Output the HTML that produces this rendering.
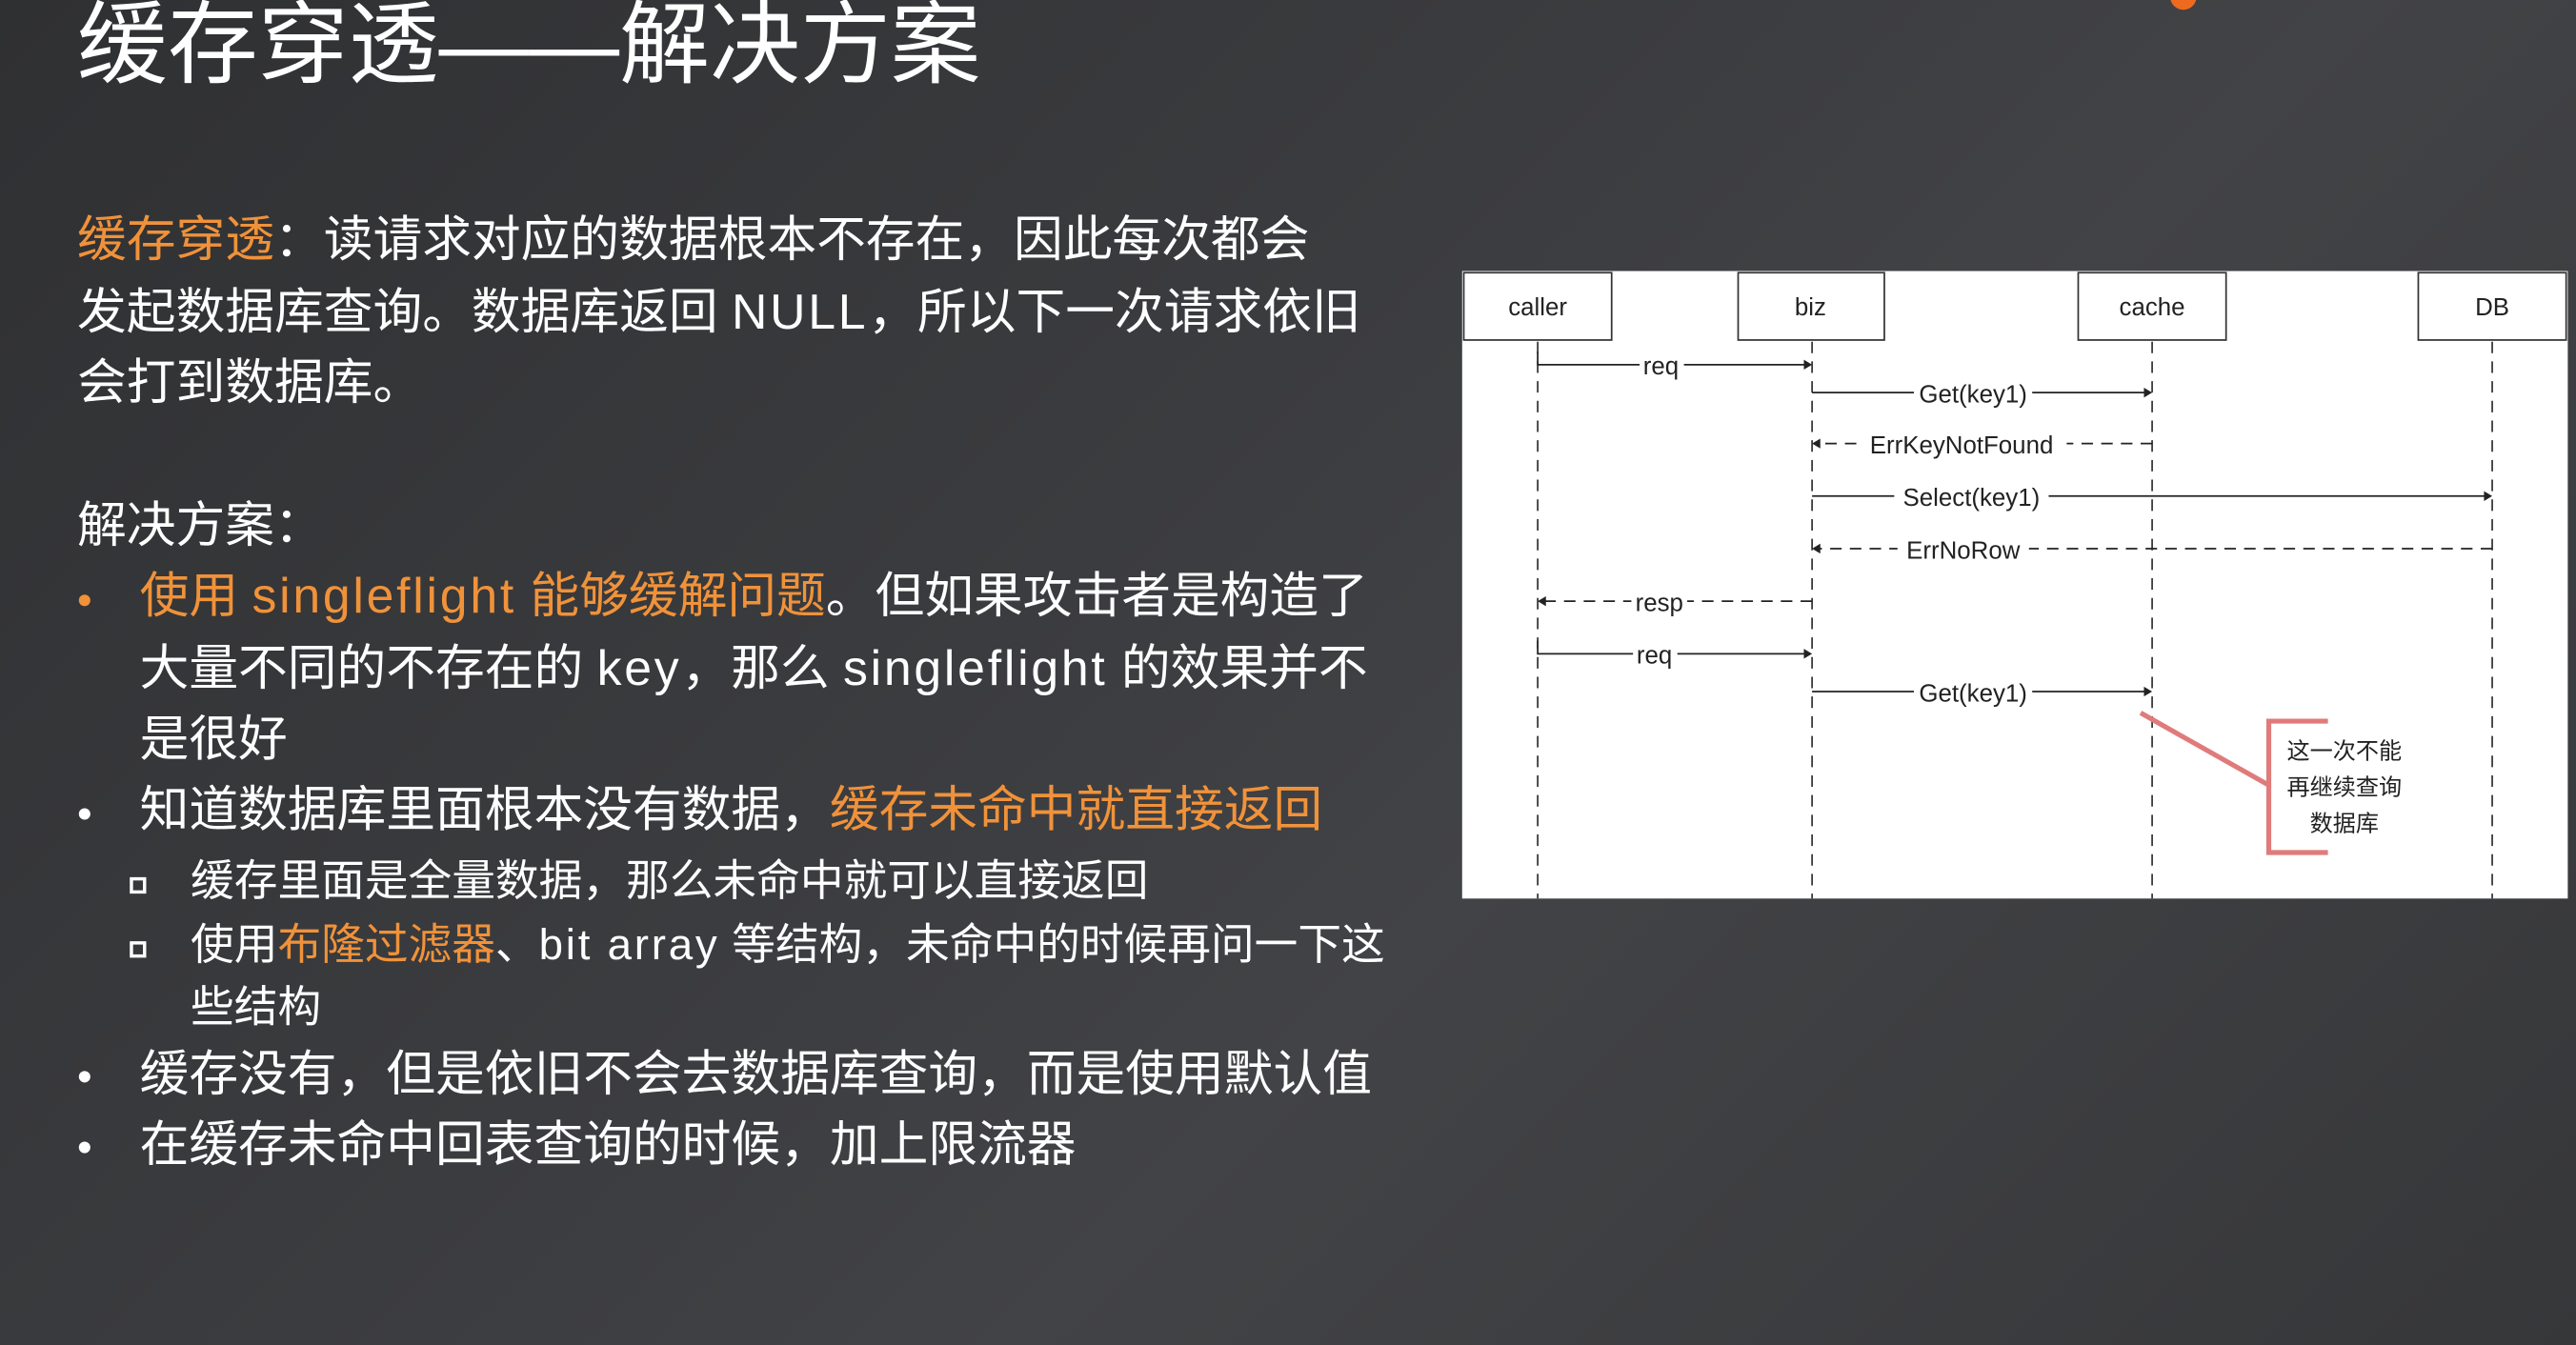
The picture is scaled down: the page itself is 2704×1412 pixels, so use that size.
<!DOCTYPE html>
<html><head><meta charset="utf-8"><style>
html,body{margin:0;padding:0;width:2704px;height:1412px;overflow:hidden;background:#393a3d;}
#w{position:absolute;left:0;top:0;width:1568px;height:819px;transform:scale(1.72449);transform-origin:0 0;
background:linear-gradient(135deg,#2f3032 0%,#3c3d40 45%,#424346 60%,#363739 100%);
font-family:"Liberation Sans","Noto Sans CJK SC",sans-serif;color:#fff;}
.l{position:absolute;white-space:nowrap;line-height:44px;height:44px;}
.t{font-size:30px;}
.s{font-size:26.5px;}
.o{color:#f0923a;}
.e{letter-spacing:1.6px;}
.dot{position:absolute;width:7px;height:7px;border-radius:50%;background:#fff;}
.sq{position:absolute;width:6px;height:6px;border:2px solid #fff;}
</style></head><body><div id="w">
<div style="position:absolute;left:1321px;top:-10px;width:16px;height:16px;border-radius:50%;background:#ee6a1e"></div>
<div class="l" style="left:47px;top:-3px;font-size:55px;line-height:60px;height:60px;">缓存穿透——解决方案</div>

<div class="l t" style="left:47px;top:125px"><span class="o">缓存穿透</span>：读请求对应的数据根本不存在，因此每次都会</div>
<div class="l t" style="left:47px;top:169px">发起数据库查询。数据库返回 <span class="e">NULL</span>，所以下一次请求依旧</div>
<div class="l t" style="left:47px;top:212px">会打到数据库。</div>
<div class="l t" style="left:47px;top:299px">解决方案：</div>

<div class="dot" style="left:48px;top:362px;background:#f0923a"></div>
<div class="l t" style="left:85px;top:342px"><span class="o">使用 <span class="e">singleflight</span> 能够缓解问题</span>。但如果攻击者是构造了</div>
<div class="l t" style="left:85px;top:386px">大量不同的不存在的 <span class="e">key</span>，那么 <span class="e">singleflight</span> 的效果并不</div>
<div class="l t" style="left:85px;top:429px">是很好</div>
<div class="dot" style="left:48px;top:492px"></div>
<div class="l t" style="left:85px;top:472px">知道数据库里面根本没有数据，<span class="o">缓存未命中就直接返回</span></div>
<div class="sq" style="left:79px;top:534px"></div>
<div class="l s" style="left:116px;top:514px">缓存里面是全量数据，那么未命中就可以直接返回</div>
<div class="sq" style="left:79px;top:573px"></div>
<div class="l s" style="left:116px;top:553px">使用<span class="o">布隆过滤器</span>、<span class="e">bit array</span> 等结构，未命中的时候再问一下这</div>
<div class="l s" style="left:116px;top:591px">些结构</div>
<div class="dot" style="left:48px;top:652px"></div>
<div class="l t" style="left:85px;top:633px">缓存没有，但是依旧不会去数据库查询，而是使用默认值</div>
<div class="dot" style="left:48px;top:695px"></div>
<div class="l t" style="left:85px;top:676px">在缓存未命中回表查询的时候，加上限流器</div>

<svg style="position:absolute;left:0;top:0" width="1568" height="819" font-family="Liberation Sans, Noto Sans CJK SC, sans-serif">
<rect x="890" y="165" width="673" height="382" fill="#fff"/>
<g fill="#fff" stroke="#333" stroke-width="1">
<rect x="891" y="166" width="90" height="41"/><rect x="1058" y="166" width="89" height="41"/>
<rect x="1265" y="166" width="90" height="41"/><rect x="1472" y="166" width="90" height="41"/>
</g>
<g font-size="15" fill="#222" text-anchor="middle">
<text x="936" y="192">caller</text><text x="1102" y="192">biz</text><text x="1310" y="192">cache</text><text x="1517" y="192">DB</text>
</g>
<g stroke="#333" stroke-width="1" stroke-dasharray="7,5" fill="none">
<line x1="936" y1="208" x2="936" y2="547"/><line x1="1103" y1="208" x2="1103" y2="547"/>
<line x1="1310" y1="208" x2="1310" y2="547"/><line x1="1517" y1="208" x2="1517" y2="547"/>
</g>
<g stroke="#222" stroke-width="1" fill="none">
<path d="M936 214V222H1100"/><path d="M1103 239H1307"/><path d="M1103 302H1514"/>
<path d="M936 390V398H1100"/><path d="M1103 421H1307"/>
<g stroke-dasharray="7,5"><path d="M1310 270H1106"/><path d="M1517 334H1106"/><path d="M1103 366H939"/></g>
</g>
<g fill="#222">
<path d="M1103 222l-5-3v6z"/><path d="M1310 239l-5-3v6z"/><path d="M1517 302l-5-3v6z"/><path d="M1103 398l-5-3v6z"/><path d="M1310 421l-5-3v6z"/>
<path d="M1103 270l5-3v6z"/><path d="M1103 334l5-3v6z"/><path d="M936 366l5-3v6z"/>
</g>
<g font-size="15" fill="#222" text-anchor="middle">
<rect x="998" y="214" width="27" height="17" fill="#fff"/><text x="1011" y="228">req</text>
<rect x="1165" y="231" width="72" height="17" fill="#fff"/><text x="1201" y="245">Get(key1)</text>
<rect x="1130" y="262" width="128" height="17" fill="#fff"/><text x="1194" y="276">ErrKeyNotFound</text>
<rect x="1153" y="294" width="94" height="17" fill="#fff"/><text x="1200" y="308">Select(key1)</text>
<rect x="1155" y="326" width="80" height="17" fill="#fff"/><text x="1195" y="340">ErrNoRow</text>
<rect x="993" y="358" width="34" height="17" fill="#fff"/><text x="1010" y="372">resp</text>
<rect x="994" y="390" width="27" height="17" fill="#fff"/><text x="1007" y="404">req</text>
<rect x="1165" y="413" width="72" height="17" fill="#fff"/><text x="1201" y="427">Get(key1)</text>
</g>
<g stroke="#e07b7b" stroke-width="3" fill="none">
<path d="M1303 434L1381 478"/><path d="M1417 439H1381V519H1417"/>
</g>
<g font-size="14" fill="#222" text-anchor="middle">
<text x="1427" y="462">这一次不能</text><text x="1427" y="484">再继续查询</text><text x="1427" y="506">数据库</text>
</g>
</svg>
</div></body></html>
